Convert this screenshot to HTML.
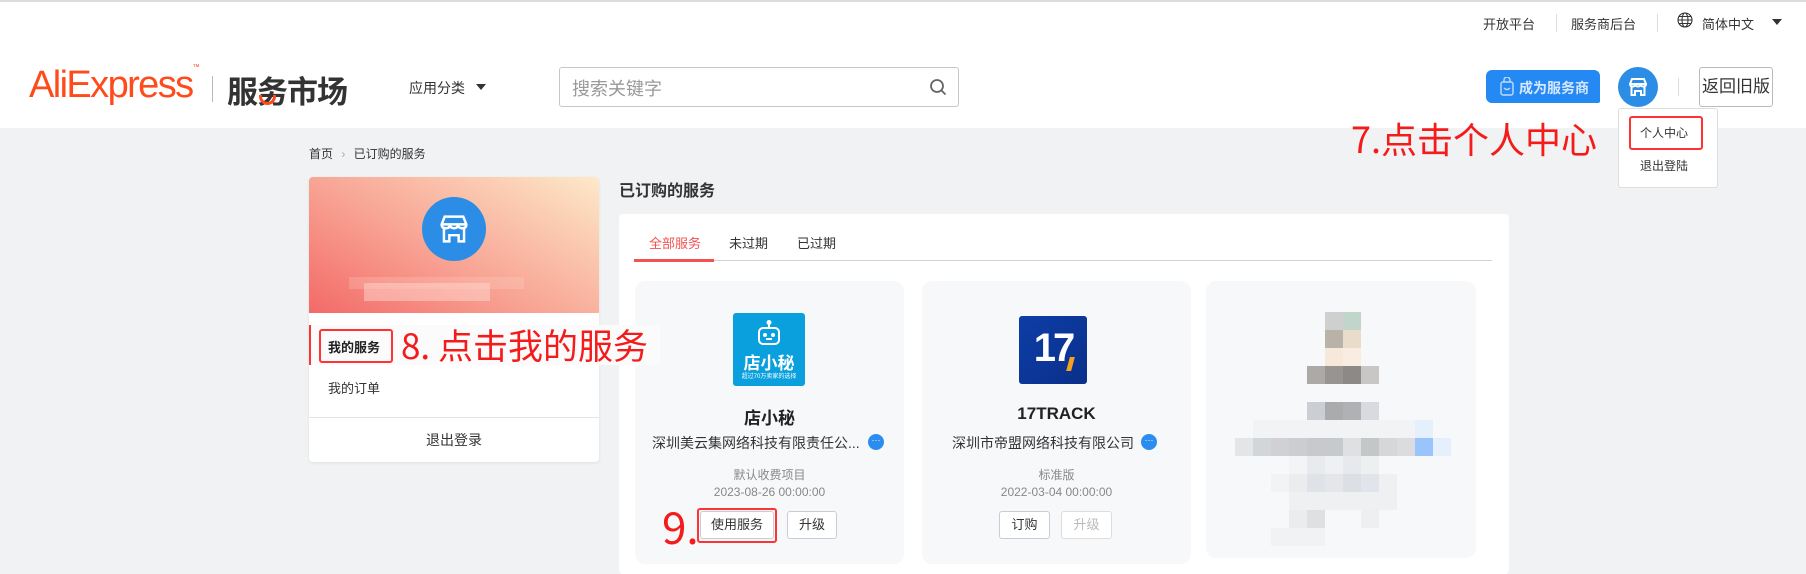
<!DOCTYPE html>
<html><head><meta charset="utf-8"><style>
*{margin:0;padding:0;box-sizing:border-box}
body{width:1806px;height:564px;overflow:hidden;background:#f1f2f4;font-family:"Liberation Sans","Noto Sans CJK SC",sans-serif;color:#333;position:relative}
.a{position:absolute;white-space:nowrap}
.red{color:#f41b1b;font-family:"Noto Sans CJK SC",sans-serif}
.btn{position:absolute;height:28px;border:1px solid #c9ccd2;border-radius:3px;background:#fff;font-size:13px;line-height:26px;text-align:center;color:#333}
.card{position:absolute;top:281px;height:283px;background:#f7f8fa;border-radius:10px}
.px{position:absolute;width:18px;height:18px}
</style></head><body>
<div class="a" style="left:0;top:0;width:1806px;height:128px;background:#fff;border-top:2px solid #dcdcdc"></div>
<div class="a" style="left:1483px;top:14px;font-size:13px;color:#333">开放平台</div>
<div class="a" style="left:1556px;top:14px;width:1px;height:18px;background:#ddd"></div>
<div class="a" style="left:1571px;top:14px;font-size:13px;color:#333">服务商后台</div>
<div class="a" style="left:1657px;top:14px;width:1px;height:18px;background:#ddd"></div>
<svg class="a" style="left:1677px;top:12px" width="16" height="16" viewBox="0 0 16 16" fill="none" stroke="#333" stroke-width="1.1"><circle cx="8" cy="8" r="7"/><ellipse cx="8" cy="8" rx="3" ry="7"/><path d="M1 8h14M2 4.5h12M2 11.5h12"/></svg>
<div class="a" style="left:1702px;top:14px;font-size:13px;color:#333">简体中文</div>
<div class="a" style="left:1772px;top:19px;border:5px solid transparent;border-top:6px solid #333"></div>
<div class="a" style="left:29px;top:64px;font-size:38px;color:#ff4a1b;letter-spacing:-1.6px;font-family:'Liberation Sans',sans-serif">AliExpress<span style="font-size:7px;vertical-align:top">™</span></div>
<div class="a" style="left:212px;top:76px;width:1px;height:26px;background:#bbb"></div>
<div class="a" style="left:227px;top:67px;font-size:31px;font-weight:bold;color:#333;letter-spacing:-1px">服务市场</div>
<div class="a" style="left:259px;top:95px;width:17px;height:10px;border:3px solid #ff4a1b;border-top:none;border-radius:0 0 10px 10px"></div>
<div class="a" style="left:409px;top:78px;font-size:14px;color:#333">应用分类</div>
<div class="a" style="left:476px;top:84px;border:5px solid transparent;border-top:6px solid #333"></div>
<div class="a" style="left:559px;top:67px;width:400px;height:40px;border:1px solid #c4c7cd;border-radius:3px;background:#fff"></div>
<div class="a" style="left:572px;top:75px;font-size:18px;color:#999">搜索关键字</div>
<svg class="a" style="left:929px;top:78px" width="18" height="18" viewBox="0 0 18 18" fill="none" stroke="#666" stroke-width="1.8"><circle cx="8" cy="8" r="6"/><path d="M12.5 12.5l4 4"/></svg>
<div class="a" style="left:1486px;top:70px;width:114px;height:33px;background:#2589f4;border-radius:6px 6px 2px 6px"></div>
<svg class="a" style="left:1500px;top:77px" width="14" height="19" viewBox="0 0 14 19" fill="none" stroke="#bfdcff" stroke-width="1.4"><rect x="1" y="5" width="12" height="13" rx="2"/><path d="M4 5V3a3 3 0 0 1 6 0v2M4 11q3 3 6 0"/></svg>
<div class="a" style="left:1519px;top:78px;font-size:14px;font-weight:bold;color:#d6e8ff">成为服务商</div>
<div class="a" style="left:1618px;top:67px;width:40px;height:40px;border-radius:50%;background:#2b8de5"></div>
<svg class="a" style="left:1627px;top:76px" width="22" height="22" viewBox="0 0 22 22" fill="none" stroke="#fff" stroke-width="2"><path d="M3 8L5 3h12l2 5q0 2.5-2.7 2.5T13.6 8q0 2.5-2.6 2.5T8.4 8q0 2.5-2.7 2.5T3 8z M3 8h16 M4.5 10.5V19h3.5v-4h6v4h3.5v-8.5"/></svg>
<div class="a" style="left:1678px;top:78px;width:1px;height:18px;background:#ddd"></div>
<div class="btn" style="left:1699px;top:67px;width:74px;height:40px;line-height:38px;font-size:17px;border-color:#bbb">返回旧版</div>
<div class="a" style="left:1618px;top:108px;width:100px;height:80px;background:#fff;border:1px solid #ddd;border-radius:3px"></div>
<div class="a" style="left:1629px;top:116px;width:74px;height:34px;border:2px solid #f33;border-radius:3px"></div>
<div class="a" style="left:1640px;top:124px;font-size:12px;color:#333">个人中心</div>
<div class="a" style="left:1640px;top:157px;font-size:12px;color:#333">退出登陆</div>
<div class="a red" style="left:1351px;top:115px;font-size:36px;line-height:46px">7.点击个人中心</div>
<div class="a" style="left:309px;top:145px;font-size:12px;color:#333">首页 <span style="color:#aaa;margin:0 5px">›</span> 已订购的服务</div>
<div class="a" style="left:309px;top:177px;width:290px;height:285px;background:#fff;border-radius:4px;overflow:hidden;box-shadow:0 1px 3px rgba(0,0,0,.08)">
 <div style="position:absolute;left:0;top:0;width:290px;height:136px;background:linear-gradient(30deg,#f36a68 0%,#f8a595 45%,#fde9c8 100%)"></div>
 <div style="position:absolute;left:113px;top:20px;width:64px;height:64px;border-radius:50%;background:#2b8de5"></div>
 <svg style="position:absolute;left:128px;top:35px" width="34" height="34" viewBox="0 0 22 22" fill="none" stroke="#fff" stroke-width="1.6"><path d="M3 8L5 3h12l2 5q0 2.5-2.7 2.5T13.6 8q0 2.5-2.6 2.5T8.4 8q0 2.5-2.7 2.5T3 8z M3 8h16 M4.5 10.5V19h3.5v-4h6v4h3.5v-8.5"/></svg>
 <div style="position:absolute;left:55px;top:106px;width:126px;height:18px;background:rgba(255,225,215,.45)"></div>
 <div style="position:absolute;left:40px;top:100px;width:175px;height:12px;background:rgba(255,210,200,.25)"></div>
 <div style="position:absolute;left:0;top:148px;width:290px;height:40px;background:#fbfbfc"></div>
 <div style="position:absolute;left:0;top:148px;width:2px;height:40px;background:#f33"></div>
 <div style="position:absolute;left:10px;top:152px;width:74px;height:34px;border:2px solid #f33;border-radius:3px"></div>
 <div style="position:absolute;left:19px;top:160px;font-size:13px;font-weight:bold;color:#222">我的服务</div>
 <div style="position:absolute;left:19px;top:201px;font-size:13px;color:#333">我的订单</div>
 <div style="position:absolute;left:0;top:240px;width:290px;height:1px;background:#e4e4e4"></div>
 <div style="position:absolute;left:0;top:253px;width:290px;text-align:center;font-size:14px;color:#333">退出登录</div>
</div>
<div class="a" style="left:619px;top:177px;font-size:16px;font-weight:bold;color:#333">已订购的服务</div>
<div class="a" style="left:619px;top:214px;width:890px;height:360px;background:#fff;border-radius:4px"></div>
<div class="a" style="left:598px;top:325px;width:62px;height:40px;background:#fbfbfc;z-index:4"></div>
<div class="a red" style="left:401px;top:322px;font-size:35px;line-height:46px;z-index:5">8. 点击我的服务</div>
<div class="a" style="left:649px;top:233px;font-size:13px;color:#f45151">全部服务</div>
<div class="a" style="left:729px;top:233px;font-size:13px;color:#333">未过期</div>
<div class="a" style="left:797px;top:233px;font-size:13px;color:#333">已过期</div>
<div class="a" style="left:634px;top:260px;width:858px;height:1px;background:#cfd2d8"></div>
<div class="a" style="left:634px;top:259px;width:80px;height:3px;background:#f45151"></div>
<div class="card" style="left:635px;width:269px"></div>
<div class="a" style="left:733px;top:313px;width:72px;height:73px;background:#0aa0de;border-radius:3px"></div>
<svg class="a" style="left:755px;top:320px" width="28" height="28" viewBox="0 0 28 28" fill="none" stroke="#fff" stroke-width="2"><path d="M14 2v5"/><circle cx="14" cy="2.5" r="1.5" fill="#fff"/><rect x="4" y="8" width="20" height="16" rx="4"/><circle cx="10" cy="15" r="1" fill="#fff"/><circle cx="18" cy="15" r="1" fill="#fff"/><path d="M11 19h6"/></svg>
<div class="a" style="left:733px;top:349px;width:72px;text-align:center;font-size:17px;color:#fff;font-weight:bold">店小秘</div>
<div class="a" style="left:733px;top:371px;width:72px;text-align:center;font-size:6px;color:#fff">超过70万卖家的选择</div>
<div class="a" style="left:635px;top:404px;width:269px;text-align:center;font-size:17px;font-weight:bold;color:#222">店小秘</div>
<div class="a" style="left:652px;top:433px;font-size:14px;color:#333">深圳美云集网络科技有限责任公...</div>
<div class="a" style="left:868px;top:434px;width:16px;height:16px;border-radius:50%;background:#2b8def;color:#fff;font-size:9px;line-height:12px;text-align:center">···</div>
<div class="a" style="left:635px;top:466px;width:269px;text-align:center;font-size:12px;color:#888">默认收费项目</div>
<div class="a" style="left:635px;top:485px;width:269px;text-align:center;font-size:12px;color:#888">2023-08-26 00:00:00</div>
<div class="btn" style="left:700px;top:511px;width:74px">使用服务</div>
<div class="a" style="left:697px;top:508px;width:80px;height:35px;border:2px solid #f33;border-radius:3px"></div>
<div class="btn" style="left:787px;top:511px;width:50px">升级</div>
<div class="a red" style="left:662px;top:500px;font-size:44px;line-height:50px">9.</div>
<div class="card" style="left:922px;width:269px"></div>
<div class="a" style="left:1019px;top:316px;width:68px;height:68px;background:linear-gradient(135deg,#0d3ea6,#0a2f8a);border-radius:3px"></div>
<div class="a" style="left:1019px;top:326px;width:68px;text-align:center;font-size:40px;font-weight:bold;color:#fff;letter-spacing:-3px">17</div>
<div class="a" style="left:1068px;top:357px;width:5px;height:14px;background:#f5a11d;transform:skewX(-15deg)"></div>
<div class="a" style="left:922px;top:404px;width:269px;text-align:center;font-size:17px;font-weight:bold;color:#222">17TRACK</div>
<div class="a" style="left:952px;top:433px;font-size:14px;color:#333">深圳市帝盟网络科技有限公司</div>
<div class="a" style="left:1141px;top:434px;width:16px;height:16px;border-radius:50%;background:#2b8def;color:#fff;font-size:9px;line-height:12px;text-align:center">···</div>
<div class="a" style="left:922px;top:466px;width:269px;text-align:center;font-size:12px;color:#888">标准版</div>
<div class="a" style="left:922px;top:485px;width:269px;text-align:center;font-size:12px;color:#888">2022-03-04 00:00:00</div>
<div class="btn" style="left:999px;top:511px;width:51px">订购</div>
<div class="btn" style="left:1061px;top:511px;width:51px;color:#bbb;border-color:#ddd">升级</div>
<div class="card" style="left:1206px;width:270px;height:277px"></div>
<div class="px" style="left:1325px;top:312px;background:#d0cfcf"></div><div class="px" style="left:1343px;top:312px;background:#c1d5cb"></div>
<div class="px" style="left:1325px;top:330px;background:#b9b2a8"></div><div class="px" style="left:1343px;top:330px;background:#e9dccb"></div>
<div class="px" style="left:1325px;top:348px;background:#f7e8d9"></div><div class="px" style="left:1343px;top:348px;background:#f9ede2"></div>
<div class="px" style="left:1307px;top:366px;background:#aca9a6"></div><div class="px" style="left:1325px;top:366px;background:#989491"></div><div class="px" style="left:1343px;top:366px;background:#8d8986"></div><div class="px" style="left:1361px;top:366px;background:#c8c7c6"></div>
<div class="px" style="left:1307px;top:402px;background:#cbced2"></div><div class="px" style="left:1325px;top:402px;background:#aaabad"></div><div class="px" style="left:1343px;top:402px;background:#b0b1b5"></div><div class="px" style="left:1361px;top:402px;background:#d8dae0"></div>
<div class="a" style="left:1253px;top:420px;width:180px;height:18px;background:#f2f3f4"></div><div class="px" style="left:1415px;top:420px;background:#e6f0fd"></div>
<div class="px" style="left:1235px;top:438px;background:#e4e5e7"></div><div class="px" style="left:1253px;top:438px;background:#d3d6d8"></div><div class="px" style="left:1271px;top:438px;background:#d1d0d4"></div><div class="px" style="left:1289px;top:438px;background:#cbcdd1"></div><div class="px" style="left:1307px;top:438px;background:#c8c9cc"></div><div class="px" style="left:1325px;top:438px;background:#c7cacd"></div><div class="px" style="left:1343px;top:438px;background:#dfe0e2"></div><div class="px" style="left:1361px;top:438px;background:#c3c7c8"></div><div class="px" style="left:1379px;top:438px;background:#d6d7d9"></div><div class="px" style="left:1397px;top:438px;background:#dcdcde"></div><div class="px" style="left:1415px;top:438px;background:#9ac5fc"></div><div class="px" style="left:1433px;top:438px;background:#e6f0fc"></div>
<div class="px" style="left:1289px;top:456px;background:#f3f4f6"></div><div class="px" style="left:1307px;top:456px;background:#e8eaee"></div><div class="px" style="left:1325px;top:456px;background:#eff0f2"></div><div class="px" style="left:1343px;top:456px;background:#e8e9ec"></div><div class="px" style="left:1361px;top:456px;background:#eeeff1"></div>
<div class="px" style="left:1271px;top:474px;background:#f2f3f4"></div><div class="px" style="left:1289px;top:474px;background:#ebecee"></div><div class="px" style="left:1307px;top:474px;background:#dfe2e6"></div><div class="px" style="left:1325px;top:474px;background:#e4e6e9"></div><div class="px" style="left:1343px;top:474px;background:#dcdfe4"></div><div class="px" style="left:1361px;top:474px;background:#e1e4ea"></div><div class="px" style="left:1379px;top:474px;background:#eff0f2"></div>
<div class="a" style="left:1289px;top:492px;width:108px;height:18px;background:#eef0f2"></div>
<div class="px" style="left:1289px;top:510px;background:#ebeced"></div><div class="px" style="left:1307px;top:510px;background:#dfe0e2"></div><div class="px" style="left:1361px;top:510px;background:#eeeff1"></div>
<div class="a" style="left:1271px;top:528px;width:54px;height:18px;background:#f1f2f4"></div>
</body></html>
